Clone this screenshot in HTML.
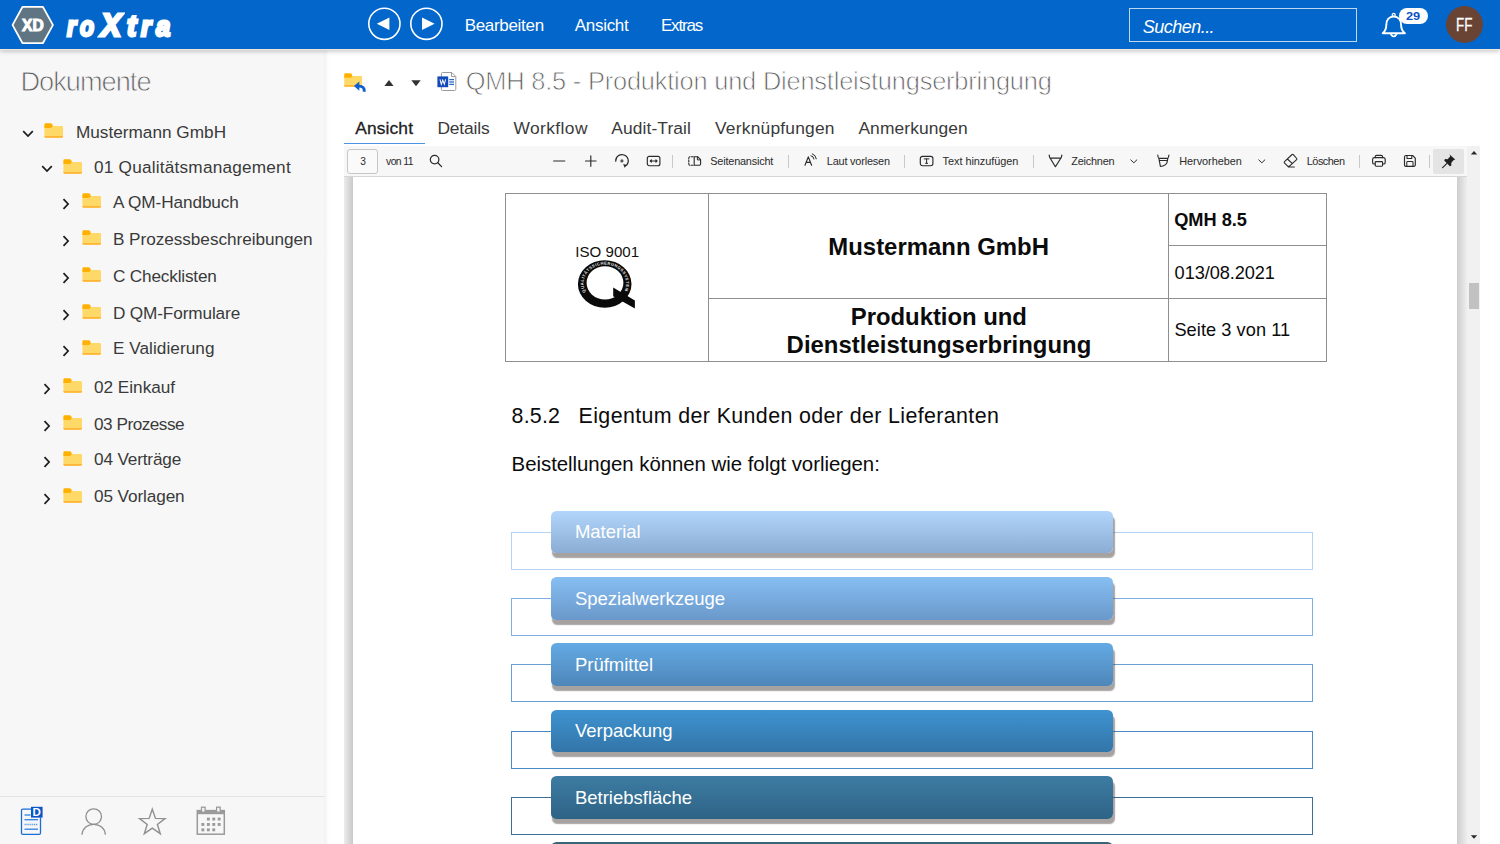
<!DOCTYPE html>
<html lang="de">
<head>
<meta charset="utf-8">
<title>roXtra - QMH 8.5 - Produktion und Dienstleistungserbringung</title>
<style>
*{box-sizing:border-box;margin:0;padding:0}
html,body{width:1500px;height:844px;overflow:hidden;background:#fff;font-family:"Liberation Sans",sans-serif;color:#333}
.t{position:absolute;white-space:nowrap;line-height:1;display:block}
svg{position:absolute;overflow:visible}
#hdr{position:absolute;left:0;top:0;width:1500px;height:49px;background:#0266cb;box-shadow:0 1.2px 0 #f0e6de,0 2px 5px rgba(0,0,0,.26);z-index:10}
#side{position:absolute;left:0;top:49px;width:326px;height:795px;background:#f7f7f7;z-index:3}
#side .edge{position:absolute;left:324px;top:0;width:5px;height:795px;background:linear-gradient(90deg,#f3f4f6,#f4f5f7 30%,#fff)}
#side .foot{position:absolute;left:0;top:747px;width:324px;height:1px;background:#e3e3e3}
#main{position:absolute;left:326px;top:49px;width:1174px;height:795px;background:#fff}
#search{position:absolute;left:1129px;top:8px;width:228px;height:34px;border:1px solid rgba(255,255,255,.75)}
#avatar{position:absolute;left:1445.6px;top:6px;width:37.2px;height:37.4px;border-radius:50%;background:#694435}
#badge{position:absolute;left:1398.7px;top:8.2px;width:29px;height:15.6px;border-radius:8px;background:#fff}

#tabline{position:absolute;left:18px;top:93.5px;width:81px;height:1.4px;background:#4a94e4}
#tb{position:absolute;left:18px;top:97px;width:1123px;height:31.2px;background:#f7f7f7;border-bottom:1.4px solid #d6d6d6}
#tb .pg{position:absolute;left:3px;top:2.5px;width:31px;height:25px;border:1px solid #c6c6c6;border-radius:3px;background:#fafafa}
#tb .sep{position:absolute;top:9px;width:1px;height:13px;background:#c8c8c8}
#tb .pin{position:absolute;left:1089px;top:2.5px;width:31px;height:25px;background:#e4e4e4;border-radius:2px}
#sb{position:absolute;left:1141px;top:97px;width:13px;height:698px;background:#f1f1f1}
#sb .th{position:absolute;left:2px;top:136.5px;width:9.5px;height:26px;background:#c1c1c1}

#vw{position:absolute;left:18px;top:128px;width:1123px;height:667px;background:#fff;overflow:hidden}
#vw .l{position:absolute;left:0;top:0;width:9px;height:667px;background:linear-gradient(90deg,#ececec,#c9c9c9)}
#vw .r{position:absolute;left:1113px;top:0;width:10px;height:667px;background:linear-gradient(90deg,#cdcdcd,#eeeeee)}
.ln{position:absolute;background:#8e8e8e}
.bar{position:absolute;left:225px;width:561.5px;height:42.7px;border-radius:5.5px;box-shadow:1.8px 5px 1.2px rgba(70,60,60,.48)}
.ol{position:absolute;left:184.5px;width:802.5px;height:38.1px;border:1.1px solid #000}
</style>
</head>
<body>
<div id="hdr"><svg style="left:0;top:0" width="200" height="49"><polygon points="12.9,25 22.7,7.1 42.7,7.1 52.6,25 42.7,42.9 22.7,42.9" fill="#fff" stroke="#fff" stroke-width="2.4" stroke-linejoin="round"/><polygon points="14.6,25 23.6,8.6 41.8,8.6 50.9,25 41.8,41.4 23.6,41.4" fill="#5f7583" stroke="#5f7583" stroke-width="1.9" stroke-linejoin="round"/></svg>
<span class="t" style="left:22.19px;top:18px;font-size:16px;color:#fff;font-weight:bold;transform:scaleX(0.9731);transform-origin:0.00px 50%;-webkit-text-stroke:1px #fff;paint-order:stroke fill;">XD</span>
<span class="t" style="left:67.04px;top:12px;font-size:28.5px;color:#fff;font-weight:bold;font-style:italic;transform:scaleX(0.8159);transform-origin:0.00px 50%;-webkit-text-stroke:2.8px #fff;paint-order:stroke fill;">r</span>
<span class="t" style="left:80.03px;top:12px;font-size:28.5px;color:#fff;font-weight:bold;font-style:italic;transform:scaleX(0.8064);transform-origin:0.00px 50%;-webkit-text-stroke:2.8px #fff;paint-order:stroke fill;">o</span>
<span class="t" style="left:101.19px;top:10px;font-size:30.5px;color:#fff;font-weight:bold;font-style:italic;transform:scaleX(0.9896);transform-origin:-1.40px 50%;-webkit-text-stroke:2.8px #fff;paint-order:stroke fill;">X</span>
<span class="t" style="left:126.61px;top:11px;font-size:29.5px;color:#fff;font-weight:bold;font-style:italic;transform:scaleX(0.9373);transform-origin:0.00px 50%;-webkit-text-stroke:2.8px #fff;paint-order:stroke fill;">t</span>
<span class="t" style="left:140.86px;top:12px;font-size:28.5px;color:#fff;font-weight:bold;font-style:italic;transform:scaleX(0.9015);transform-origin:0.00px 50%;-webkit-text-stroke:2.8px #fff;paint-order:stroke fill;">r</span>
<span class="t" style="left:156.05px;top:12px;font-size:28.5px;color:#fff;font-weight:bold;font-style:italic;transform:scaleX(0.8956);transform-origin:0.00px 50%;-webkit-text-stroke:2.8px #fff;paint-order:stroke fill;">a</span>
<svg style="left:360px;top:0" width="100" height="49"><g fill="none" stroke="#fff" stroke-width="1.6"><circle cx="24.4" cy="23.8" r="15.6"/><circle cx="66.4" cy="23.8" r="15.6"/></g><polygon points="16.8,23.7 29.4,17.4 29.4,30" fill="#fff"/><polygon points="74.6,23.7 62,17.4 62,30" fill="#fff"/></svg>
<span class="t" style="left:464.70px;top:17px;font-size:17px;color:#fff;letter-spacing:-0.314px;">Bearbeiten</span>
<span class="t" style="left:574.80px;top:17px;font-size:17px;color:#fff;letter-spacing:-0.307px;">Ansicht</span>
<span class="t" style="left:660.90px;top:17px;font-size:17px;color:#fff;letter-spacing:-1.156px;">Extras</span>
<div id="search"></div>
<span class="t" style="left:1142.80px;top:18px;font-size:18px;color:#fff;letter-spacing:-0.531px;font-style:italic;">Suchen...</span>
<svg style="left:1380px;top:10px" width="30" height="30" viewBox="0 0 30 30"><circle cx="13.7" cy="4.9" r="1.5" fill="none" stroke="#fff" stroke-width="1.3"/><path d="M2.7,23.2 H24.9 C22.4,21.2 21.1,19 21.1,15 C21.1,9.6 18,6.5 13.7,6.5 C9.4,6.5 6.3,9.6 6.3,15 C6.3,19 5.2,21.2 2.7,23.2 Z" fill="#0266cb" stroke="#fff" stroke-width="1.9" stroke-linejoin="round"/><path d="M10.6,24 q3.1,5 6.2,0" fill="none" stroke="#fff" stroke-width="1.7"/></svg>
<div id="badge"></div>
<span class="t" style="left:1406.20px;top:11px;font-size:11.8px;color:#0a50c0;font-weight:bold;transform:scaleX(1.0822);transform-origin:0.00px 50%;">29</span>
<div id="avatar"></div>
<span class="t" style="left:1455.80px;top:16px;font-size:18px;color:#fff;transform:scaleX(0.7456);transform-origin:0.00px 50%;-webkit-text-stroke:0.3px #fff;">FF</span></div>
<div id="side"><div class="edge"></div>
<span class="t" style="left:20.40px;top:19px;font-size:27.2px;color:#5c5c5c;letter-spacing:-0.988px;-webkit-text-stroke:0.85px #f7f7f7;">Dokumente</span>
<svg style="left:22.3px;top:80.9px" width="12" height="8" viewBox="0 0 12 8"><path d="M1.2,1.2 L6,6 L10.8,1.2" fill="none" stroke="#1c1c1c" stroke-width="1.7" stroke-linejoin="miter"/></svg>
<svg style="left:44.3px;top:74.4px" width="20" height="15" viewBox="0 0 20 15"><path d="M0.4,3.1 h17.5 a1.1,1.1 0 0 1 1.1,1.1 v9.4 a1.1,1.1 0 0 1 -1.1,1.1 h-16.4 a1.1,1.1 0 0 1 -1.1,-1.1 z" fill="#ffd968"/><path d="M0.4,12.9 h18.6 v0.7 a1.1,1.1 0 0 1 -1.1,1.1 h-16.4 a1.1,1.1 0 0 1 -1.1,-1.1 z" fill="#ffb536"/><path d="M0.4,1.5 a1.2,1.2 0 0 1 1.2,-1.2 h4.9 a2.3,2.3 0 0 1 2.2,1.7 a2.6,2.6 0 0 1 -2.4,2.9 h-5.9 z" fill="#ffb000"/></svg>
<span class="t" style="left:75.90px;top:75px;font-size:17.2px;color:#3a3a3a;letter-spacing:0.016px;">Mustermann GmbH</span>
<svg style="left:41.1px;top:116.0px" width="12" height="8" viewBox="0 0 12 8"><path d="M1.2,1.2 L6,6 L10.8,1.2" fill="none" stroke="#1c1c1c" stroke-width="1.7" stroke-linejoin="miter"/></svg>
<svg style="left:63.0px;top:109.5px" width="20" height="15" viewBox="0 0 20 15"><path d="M0.4,3.1 h17.5 a1.1,1.1 0 0 1 1.1,1.1 v9.4 a1.1,1.1 0 0 1 -1.1,1.1 h-16.4 a1.1,1.1 0 0 1 -1.1,-1.1 z" fill="#ffd968"/><path d="M0.4,12.9 h18.6 v0.7 a1.1,1.1 0 0 1 -1.1,1.1 h-16.4 a1.1,1.1 0 0 1 -1.1,-1.1 z" fill="#ffb536"/><path d="M0.4,1.5 a1.2,1.2 0 0 1 1.2,-1.2 h4.9 a2.3,2.3 0 0 1 2.2,1.7 a2.6,2.6 0 0 1 -2.4,2.9 h-5.9 z" fill="#ffb000"/></svg>
<span class="t" style="left:94.00px;top:110px;font-size:17.2px;color:#3a3a3a;letter-spacing:0.220px;">01 Qualitätsmanagement</span>
<svg style="left:61.9px;top:149.4px" width="8" height="12" viewBox="0 0 8 12"><path d="M1.5,1.2 L6.1,6 L1.5,10.8" fill="none" stroke="#1c1c1c" stroke-width="1.7" stroke-linejoin="miter"/></svg>
<svg style="left:82.0px;top:144.2px" width="20" height="15" viewBox="0 0 20 15"><path d="M0.4,3.1 h17.5 a1.1,1.1 0 0 1 1.1,1.1 v9.4 a1.1,1.1 0 0 1 -1.1,1.1 h-16.4 a1.1,1.1 0 0 1 -1.1,-1.1 z" fill="#ffd968"/><path d="M0.4,12.9 h18.6 v0.7 a1.1,1.1 0 0 1 -1.1,1.1 h-16.4 a1.1,1.1 0 0 1 -1.1,-1.1 z" fill="#ffb536"/><path d="M0.4,1.5 a1.2,1.2 0 0 1 1.2,-1.2 h4.9 a2.3,2.3 0 0 1 2.2,1.7 a2.6,2.6 0 0 1 -2.4,2.9 h-5.9 z" fill="#ffb000"/></svg>
<span class="t" style="left:112.90px;top:145px;font-size:17.2px;color:#3a3a3a;letter-spacing:-0.088px;">A QM-Handbuch</span>
<svg style="left:61.9px;top:185.9px" width="8" height="12" viewBox="0 0 8 12"><path d="M1.5,1.2 L6.1,6 L1.5,10.8" fill="none" stroke="#1c1c1c" stroke-width="1.7" stroke-linejoin="miter"/></svg>
<svg style="left:82.0px;top:180.7px" width="20" height="15" viewBox="0 0 20 15"><path d="M0.4,3.1 h17.5 a1.1,1.1 0 0 1 1.1,1.1 v9.4 a1.1,1.1 0 0 1 -1.1,1.1 h-16.4 a1.1,1.1 0 0 1 -1.1,-1.1 z" fill="#ffd968"/><path d="M0.4,12.9 h18.6 v0.7 a1.1,1.1 0 0 1 -1.1,1.1 h-16.4 a1.1,1.1 0 0 1 -1.1,-1.1 z" fill="#ffb536"/><path d="M0.4,1.5 a1.2,1.2 0 0 1 1.2,-1.2 h4.9 a2.3,2.3 0 0 1 2.2,1.7 a2.6,2.6 0 0 1 -2.4,2.9 h-5.9 z" fill="#ffb000"/></svg>
<span class="t" style="left:112.90px;top:182px;font-size:17.2px;color:#3a3a3a;letter-spacing:-0.041px;">B Prozessbeschreibungen</span>
<svg style="left:61.9px;top:223.3px" width="8" height="12" viewBox="0 0 8 12"><path d="M1.5,1.2 L6.1,6 L1.5,10.8" fill="none" stroke="#1c1c1c" stroke-width="1.7" stroke-linejoin="miter"/></svg>
<svg style="left:82.0px;top:218.1px" width="20" height="15" viewBox="0 0 20 15"><path d="M0.4,3.1 h17.5 a1.1,1.1 0 0 1 1.1,1.1 v9.4 a1.1,1.1 0 0 1 -1.1,1.1 h-16.4 a1.1,1.1 0 0 1 -1.1,-1.1 z" fill="#ffd968"/><path d="M0.4,12.9 h18.6 v0.7 a1.1,1.1 0 0 1 -1.1,1.1 h-16.4 a1.1,1.1 0 0 1 -1.1,-1.1 z" fill="#ffb536"/><path d="M0.4,1.5 a1.2,1.2 0 0 1 1.2,-1.2 h4.9 a2.3,2.3 0 0 1 2.2,1.7 a2.6,2.6 0 0 1 -2.4,2.9 h-5.9 z" fill="#ffb000"/></svg>
<span class="t" style="left:112.90px;top:219px;font-size:17.2px;color:#3a3a3a;letter-spacing:-0.167px;">C Checklisten</span>
<svg style="left:61.9px;top:260.0px" width="8" height="12" viewBox="0 0 8 12"><path d="M1.5,1.2 L6.1,6 L1.5,10.8" fill="none" stroke="#1c1c1c" stroke-width="1.7" stroke-linejoin="miter"/></svg>
<svg style="left:82.0px;top:254.8px" width="20" height="15" viewBox="0 0 20 15"><path d="M0.4,3.1 h17.5 a1.1,1.1 0 0 1 1.1,1.1 v9.4 a1.1,1.1 0 0 1 -1.1,1.1 h-16.4 a1.1,1.1 0 0 1 -1.1,-1.1 z" fill="#ffd968"/><path d="M0.4,12.9 h18.6 v0.7 a1.1,1.1 0 0 1 -1.1,1.1 h-16.4 a1.1,1.1 0 0 1 -1.1,-1.1 z" fill="#ffb536"/><path d="M0.4,1.5 a1.2,1.2 0 0 1 1.2,-1.2 h4.9 a2.3,2.3 0 0 1 2.2,1.7 a2.6,2.6 0 0 1 -2.4,2.9 h-5.9 z" fill="#ffb000"/></svg>
<span class="t" style="left:112.90px;top:256px;font-size:17.2px;color:#3a3a3a;letter-spacing:-0.124px;">D QM-Formulare</span>
<svg style="left:61.9px;top:295.8px" width="8" height="12" viewBox="0 0 8 12"><path d="M1.5,1.2 L6.1,6 L1.5,10.8" fill="none" stroke="#1c1c1c" stroke-width="1.7" stroke-linejoin="miter"/></svg>
<svg style="left:82.0px;top:290.6px" width="20" height="15" viewBox="0 0 20 15"><path d="M0.4,3.1 h17.5 a1.1,1.1 0 0 1 1.1,1.1 v9.4 a1.1,1.1 0 0 1 -1.1,1.1 h-16.4 a1.1,1.1 0 0 1 -1.1,-1.1 z" fill="#ffd968"/><path d="M0.4,12.9 h18.6 v0.7 a1.1,1.1 0 0 1 -1.1,1.1 h-16.4 a1.1,1.1 0 0 1 -1.1,-1.1 z" fill="#ffb536"/><path d="M0.4,1.5 a1.2,1.2 0 0 1 1.2,-1.2 h4.9 a2.3,2.3 0 0 1 2.2,1.7 a2.6,2.6 0 0 1 -2.4,2.9 h-5.9 z" fill="#ffb000"/></svg>
<span class="t" style="left:112.90px;top:291px;font-size:17.2px;color:#3a3a3a;letter-spacing:0.056px;">E Validierung</span>
<svg style="left:42.9px;top:334.3px" width="8" height="12" viewBox="0 0 8 12"><path d="M1.5,1.2 L6.1,6 L1.5,10.8" fill="none" stroke="#1c1c1c" stroke-width="1.7" stroke-linejoin="miter"/></svg>
<svg style="left:63.0px;top:329.1px" width="20" height="15" viewBox="0 0 20 15"><path d="M0.4,3.1 h17.5 a1.1,1.1 0 0 1 1.1,1.1 v9.4 a1.1,1.1 0 0 1 -1.1,1.1 h-16.4 a1.1,1.1 0 0 1 -1.1,-1.1 z" fill="#ffd968"/><path d="M0.4,12.9 h18.6 v0.7 a1.1,1.1 0 0 1 -1.1,1.1 h-16.4 a1.1,1.1 0 0 1 -1.1,-1.1 z" fill="#ffb536"/><path d="M0.4,1.5 a1.2,1.2 0 0 1 1.2,-1.2 h4.9 a2.3,2.3 0 0 1 2.2,1.7 a2.6,2.6 0 0 1 -2.4,2.9 h-5.9 z" fill="#ffb000"/></svg>
<span class="t" style="left:94.00px;top:330px;font-size:17.2px;color:#3a3a3a;letter-spacing:-0.014px;">02 Einkauf</span>
<svg style="left:42.9px;top:371.0px" width="8" height="12" viewBox="0 0 8 12"><path d="M1.5,1.2 L6.1,6 L1.5,10.8" fill="none" stroke="#1c1c1c" stroke-width="1.7" stroke-linejoin="miter"/></svg>
<svg style="left:63.0px;top:365.8px" width="20" height="15" viewBox="0 0 20 15"><path d="M0.4,3.1 h17.5 a1.1,1.1 0 0 1 1.1,1.1 v9.4 a1.1,1.1 0 0 1 -1.1,1.1 h-16.4 a1.1,1.1 0 0 1 -1.1,-1.1 z" fill="#ffd968"/><path d="M0.4,12.9 h18.6 v0.7 a1.1,1.1 0 0 1 -1.1,1.1 h-16.4 a1.1,1.1 0 0 1 -1.1,-1.1 z" fill="#ffb536"/><path d="M0.4,1.5 a1.2,1.2 0 0 1 1.2,-1.2 h4.9 a2.3,2.3 0 0 1 2.2,1.7 a2.6,2.6 0 0 1 -2.4,2.9 h-5.9 z" fill="#ffb000"/></svg>
<span class="t" style="left:94.00px;top:367px;font-size:17.2px;color:#3a3a3a;letter-spacing:-0.491px;">03 Prozesse</span>
<svg style="left:42.9px;top:406.8px" width="8" height="12" viewBox="0 0 8 12"><path d="M1.5,1.2 L6.1,6 L1.5,10.8" fill="none" stroke="#1c1c1c" stroke-width="1.7" stroke-linejoin="miter"/></svg>
<svg style="left:63.0px;top:401.6px" width="20" height="15" viewBox="0 0 20 15"><path d="M0.4,3.1 h17.5 a1.1,1.1 0 0 1 1.1,1.1 v9.4 a1.1,1.1 0 0 1 -1.1,1.1 h-16.4 a1.1,1.1 0 0 1 -1.1,-1.1 z" fill="#ffd968"/><path d="M0.4,12.9 h18.6 v0.7 a1.1,1.1 0 0 1 -1.1,1.1 h-16.4 a1.1,1.1 0 0 1 -1.1,-1.1 z" fill="#ffb536"/><path d="M0.4,1.5 a1.2,1.2 0 0 1 1.2,-1.2 h4.9 a2.3,2.3 0 0 1 2.2,1.7 a2.6,2.6 0 0 1 -2.4,2.9 h-5.9 z" fill="#ffb000"/></svg>
<span class="t" style="left:94.00px;top:402px;font-size:17.2px;color:#3a3a3a;letter-spacing:-0.162px;">04 Verträge</span>
<svg style="left:42.9px;top:443.7px" width="8" height="12" viewBox="0 0 8 12"><path d="M1.5,1.2 L6.1,6 L1.5,10.8" fill="none" stroke="#1c1c1c" stroke-width="1.7" stroke-linejoin="miter"/></svg>
<svg style="left:63.0px;top:438.5px" width="20" height="15" viewBox="0 0 20 15"><path d="M0.4,3.1 h17.5 a1.1,1.1 0 0 1 1.1,1.1 v9.4 a1.1,1.1 0 0 1 -1.1,1.1 h-16.4 a1.1,1.1 0 0 1 -1.1,-1.1 z" fill="#ffd968"/><path d="M0.4,12.9 h18.6 v0.7 a1.1,1.1 0 0 1 -1.1,1.1 h-16.4 a1.1,1.1 0 0 1 -1.1,-1.1 z" fill="#ffb536"/><path d="M0.4,1.5 a1.2,1.2 0 0 1 1.2,-1.2 h4.9 a2.3,2.3 0 0 1 2.2,1.7 a2.6,2.6 0 0 1 -2.4,2.9 h-5.9 z" fill="#ffb000"/></svg>
<span class="t" style="left:94.00px;top:439px;font-size:17.2px;color:#3a3a3a;letter-spacing:-0.111px;">05 Vorlagen</span>
<div class="foot"></div>
<svg style="left:20px;top:757px" width="24" height="30" viewBox="0 0 24 30"><path d="M11,3.2 h-8.2 a1.3,1.3 0 0 0 -1.3,1.3 v22.6 a1.3,1.3 0 0 0 1.3,1.3 h16.4 a1.3,1.3 0 0 0 1.3,-1.3 v-15.5" fill="none" stroke="#1a6fd6" stroke-width="1.3"/><g stroke="#2f7fe0" stroke-width="1.3"><path d="M4.5,9 h6"/><path d="M4.5,13.7 h13.5"/><path d="M4.5,23.2 h13.5"/></g><path d="M4.5,18.4 h13.5" stroke="#5b9be8" stroke-width="1.5" stroke-dasharray="1.2 0.7"/><rect x="11" y="0.8" width="11.6" height="10.8" fill="#0a55c8"/></svg>
<span class="t" style="left:32.50px;top:758px;font-size:11.5px;color:#fff;font-weight:bold;">D</span>
<svg style="left:80px;top:757px" width="28" height="30" viewBox="0 0 28 30"><circle cx="13.7" cy="10.6" r="7.8" fill="none" stroke="#909090" stroke-width="1.3"/><path d="M2,28.7 c0.5,-6.5 5.4,-10.4 11.7,-10.4 s11.2,3.9 11.7,10.4" fill="none" stroke="#909090" stroke-width="1.3"/></svg>
<svg style="left:138px;top:757px" width="30" height="30" viewBox="0 0 30 30"><path d="M14.3,3.2 L17.5,12.4 L27,12.6 L19.4,18.4 L22.3,27.7 L14.3,22.2 L6.3,27.7 L9.2,18.4 L1.6,12.6 L11.1,12.4 Z" fill="none" stroke="#909090" stroke-width="1.4" stroke-linejoin="miter"/></svg>
<svg style="left:196px;top:757px" width="30" height="30" viewBox="0 0 30 30"><rect x="1.3" y="4.6" width="27" height="23.6" fill="none" stroke="#9a9a9a" stroke-width="1.5"/><rect x="1.3" y="4.6" width="27" height="3.6" fill="#9a9a9a"/><rect x="5.5" y="1.2" width="3.6" height="5" fill="#f7f7f7" stroke="#9a9a9a" stroke-width="1.3"/><rect x="20.6" y="1.2" width="3.6" height="5" fill="#f7f7f7" stroke="#9a9a9a" stroke-width="1.3"/><g fill="#9a9a9a"><rect x="10.9" y="11.6" width="2.9" height="2.9"/><rect x="16.3" y="11.6" width="2.9" height="2.9"/><rect x="21.7" y="11.6" width="2.9" height="2.9"/><rect x="5.4" y="17" width="2.9" height="2.9"/><rect x="10.9" y="17" width="2.9" height="2.9"/><rect x="16.3" y="17" width="2.9" height="2.9"/><rect x="21.7" y="17" width="2.9" height="2.9"/><rect x="5.4" y="22.4" width="2.9" height="2.9"/><rect x="10.9" y="22.4" width="2.9" height="2.9"/><rect x="16.3" y="22.4" width="2.9" height="2.9"/></g></svg></div>
<div id="main">
<svg style="left:17.0px;top:23.0px" width="26" height="22" viewBox="0 0 26 22"><path d="M1.2,4 h16.8 a1.1,1.1 0 0 1 1.1,1.1 v8.6 a1.1,1.1 0 0 1 -1.1,1.1 h-15.7 a1.1,1.1 0 0 1 -1.1,-1.1 z" fill="#ffd968"/><path d="M1.2,13.1 h17.9 v0.6 a1.1,1.1 0 0 1 -1.1,1.1 h-15.7 a1.1,1.1 0 0 1 -1.1,-1.1 z" fill="#ffb536"/><path d="M1.2,2.4 a1.2,1.2 0 0 1 1.2,-1.2 h4.7 a2.2,2.2 0 0 1 2.1,1.7 a2.5,2.5 0 0 1 -2.3,2.8 h-5.7 z" fill="#ffb000"/><polygon points="10.9,14.1 16.3,9.5 16.3,18.7" fill="#0b5fd3"/><path d="M15.8,14.1 C19.6,14.1 21.9,15.9 21.1,19.8" fill="none" stroke="#0b5fd3" stroke-width="2.9"/></svg>
<svg style="left:57.0px;top:30.0px" width="12" height="8" viewBox="0 0 12 8"><polygon points="6,1 10.6,7 1.4,7" fill="#333"/></svg>
<svg style="left:84.0px;top:30.0px" width="12" height="8" viewBox="0 0 12 8"><polygon points="1.3,1.2 10.7,1.2 6,7.2" fill="#333"/></svg>
<svg style="left:111.0px;top:22.0px" width="20" height="22" viewBox="0 0 20 22"><path d="M5.5,1.5 h9.3 l4,4 v12.9 a1.1,1.1 0 0 1 -1.1,1.1 h-12.2 a1.1,1.1 0 0 1 -1.1,-1.1 v-15.8 a1.1,1.1 0 0 1 1.1,-1.1 z" fill="#fff" stroke="#9a9a9a" stroke-width="1"/><path d="M14.5,1.6 v4 h4" fill="none" stroke="#9a9a9a" stroke-width="1"/><g stroke="#2a6ad2" stroke-width="1.3"><path d="M12.2,8.6 h4.8"/><path d="M12.2,11 h4.8"/><path d="M12.2,13.4 h4.8"/></g><rect x="0.4" y="5.4" width="10.8" height="10.8" fill="#1349b8"/><path d="M3,8.4 L4.3,13.3 L5.8,9 L7.3,13.3 L8.6,8.4" fill="none" stroke="#fff" stroke-width="1.05" stroke-linejoin="miter"/></svg>
<span class="t" style="left:139.80px;top:20px;font-size:25.4px;color:#606060;letter-spacing:-0.196px;-webkit-text-stroke:0.8px #fff;">QMH 8.5 - Produktion und Dienstleistungserbringung</span>
<span class="t" style="left:29.30px;top:71px;font-size:17.4px;color:#222;letter-spacing:0.108px;-webkit-text-stroke:0.3px #222;">Ansicht</span>
<span class="t" style="left:111.40px;top:71px;font-size:17.4px;color:#3a3a3a;letter-spacing:-0.132px;">Details</span>
<span class="t" style="left:187.40px;top:71px;font-size:17.4px;color:#3a3a3a;letter-spacing:0.419px;">Workflow</span>
<span class="t" style="left:285.20px;top:71px;font-size:17.4px;color:#3a3a3a;letter-spacing:0.115px;">Audit-Trail</span>
<span class="t" style="left:389.00px;top:71px;font-size:17.4px;color:#3a3a3a;letter-spacing:0.211px;">Verknüpfungen</span>
<span class="t" style="left:532.40px;top:71px;font-size:17.4px;color:#3a3a3a;letter-spacing:0.107px;">Anmerkungen</span>
<div id="tabline"></div>
<div id="vw"><div class="l"></div><div class="r"></div></div>
<div class="ln" style="left:179.5px;top:143.9px;width:821.6px;height:1.1px"></div>
<div class="ln" style="left:179.5px;top:312.1px;width:821.6px;height:1.1px"></div>
<div class="ln" style="left:382.9px;top:248.7px;width:617.7px;height:1.1px"></div>
<div class="ln" style="left:842.6px;top:196.3px;width:158.0px;height:1.1px"></div>
<div class="ln" style="left:179.0px;top:144.4px;width:1.1px;height:168.2px"></div>
<div class="ln" style="left:382.4px;top:144.4px;width:1.1px;height:168.2px"></div>
<div class="ln" style="left:842.1px;top:144.4px;width:1.1px;height:168.2px"></div>
<div class="ln" style="left:1000.1px;top:144.4px;width:1.1px;height:168.2px"></div>
<span class="t" style="left:249.20px;top:195px;font-size:15.1px;color:#111;letter-spacing:0.029px;">ISO 9001</span>
<svg style="left:244.0px;top:206.0px" width="72" height="60" viewBox="0 0 72 60"><path fill-rule="evenodd" fill="#0a0a0a" d="M7.9,29 a26.8,23.8 0 1 0 53.6,0 a26.8,23.8 0 1 0 -53.6,0 Z M16.6,27.9 a18.4,16.7 0 1 1 36.8,0 a18.4,16.7 0 1 1 -36.8,0 Z"/><polygon fill="#0a0a0a" points="43.2,32.6 64.9,45.4 64.9,53.4 43.2,41.2"/><g font-family="Liberation Sans" font-weight="bold" font-size="4" fill="#f0f0f0" text-anchor="middle"><text x="15.10" y="35.54" transform="rotate(-114.5 15.10 35.54)">Q</text><text x="13.97" y="32.18" transform="rotate(-102.8 13.97 32.18)">U</text><text x="13.55" y="28.77" transform="rotate(-91.1 13.55 28.77)">A</text><text x="13.80" y="25.54" transform="rotate(-80.0 13.80 25.54)">L</text><text x="14.36" y="23.29" transform="rotate(-72.3 14.36 23.29)">I</text><text x="15.22" y="21.12" transform="rotate(-64.6 15.22 21.12)">T</text><text x="16.85" y="18.35" transform="rotate(-54.5 16.85 18.35)">Ä</text><text x="18.95" y="15.88" transform="rotate(-44.9 18.95 15.88)">T</text><text x="21.30" y="13.87" transform="rotate(-36.2 21.30 13.87)">S</text><text x="24.05" y="12.16" transform="rotate(-27.6 24.05 12.16)">S</text><text x="26.29" y="11.14" transform="rotate(-21.3 26.29 11.14)">I</text><text x="28.72" y="10.35" transform="rotate(-14.9 28.72 10.35)">C</text><text x="32.08" y="9.71" transform="rotate(-6.6 32.08 9.71)">H</text><text x="35.44" y="9.56" transform="rotate(1.4 35.44 9.56)">E</text><text x="38.73" y="9.87" transform="rotate(9.3 38.73 9.87)">R</text><text x="42.09" y="10.68" transform="rotate(17.8 42.09 10.68)">U</text><text x="45.30" y="11.98" transform="rotate(26.5 45.30 11.98)">N</text><text x="48.32" y="13.81" transform="rotate(35.9 48.32 13.81)">G</text><text x="50.94" y="16.06" transform="rotate(45.6 50.94 16.06)">S</text><text x="53.00" y="18.56" transform="rotate(55.3 53.00 18.56)">S</text><text x="54.59" y="21.35" transform="rotate(65.4 54.59 21.35)">Y</text><text x="55.65" y="24.37" transform="rotate(76.0 55.65 24.37)">S</text><text x="56.12" y="27.47" transform="rotate(86.7 56.12 27.47)">T</text><text x="56.02" y="30.56" transform="rotate(97.2 56.02 30.56)">E</text><text x="55.20" y="34.03" transform="rotate(109.2 55.20 34.03)">M</text></g></svg>
<span class="t" style="left:502.30px;top:186px;font-size:23.9px;color:#0b0b0b;letter-spacing:0.019px;font-weight:bold;">Mustermann GmbH</span>
<span class="t" style="left:524.80px;top:256px;font-size:23.9px;color:#0b0b0b;letter-spacing:-0.029px;font-weight:bold;">Produktion und</span>
<span class="t" style="left:460.60px;top:284px;font-size:23.9px;color:#0b0b0b;letter-spacing:0.030px;font-weight:bold;">Dienstleistungserbringung</span>
<span class="t" style="left:848.20px;top:162px;font-size:18.2px;color:#0b0b0b;letter-spacing:-0.003px;font-weight:bold;">QMH 8.5</span>
<span class="t" style="left:848.60px;top:215px;font-size:18.2px;color:#0b0b0b;letter-spacing:-0.081px;">013/08.2021</span>
<span class="t" style="left:848.40px;top:272px;font-size:18.2px;color:#0b0b0b;letter-spacing:0.069px;">Seite 3 von 11</span>
<span class="t" style="left:185.60px;top:357px;font-size:21.4px;color:#0b0b0b;letter-spacing:0.202px;">8.5.2</span>
<span class="t" style="left:252.60px;top:357px;font-size:21.4px;color:#0b0b0b;letter-spacing:0.377px;">Eigentum der Kunden oder der Lieferanten</span>
<span class="t" style="left:185.60px;top:405px;font-size:20.4px;color:#0b0b0b;letter-spacing:-0.033px;">Beistellungen können wie folgt vorliegen:</span>
<div class="ol" style="top:482.5px;border-color:#b7d3f3"></div>
<div class="bar" style="top:461.6px;background:linear-gradient(180deg,#b2d5fb,#8badd4)"></div>
<span class="t" style="left:248.90px;top:474px;font-size:18.5px;color:#fff;">Material</span>
<div class="ol" style="top:548.9px;border-color:#7fb0e3"></div>
<div class="bar" style="top:528.0px;background:linear-gradient(180deg,#87bff3,#6a98ca)"></div>
<span class="t" style="left:248.90px;top:541px;font-size:18.5px;color:#fff;">Spezialwerkzeuge</span>
<div class="ol" style="top:615.2px;border-color:#68a0d6"></div>
<div class="bar" style="top:594.3px;background:linear-gradient(180deg,#63aae4,#4e86b9)"></div>
<span class="t" style="left:248.90px;top:607px;font-size:18.5px;color:#fff;">Prüfmittel</span>
<div class="ol" style="top:681.5px;border-color:#4a8bc3"></div>
<div class="bar" style="top:660.6px;background:linear-gradient(180deg,#3f93d1,#3275a8)"></div>
<span class="t" style="left:248.90px;top:673px;font-size:18.5px;color:#fff;">Verpackung</span>
<div class="ol" style="top:747.9px;border-color:#3b6f98"></div>
<div class="bar" style="top:727.0px;background:linear-gradient(180deg,#3d7ca3,#2e6385)"></div>
<span class="t" style="left:248.90px;top:740px;font-size:18.5px;color:#fff;">Betriebsfläche</span>
<div class="ol" style="top:814.2px;border-color:#35606f"></div>
<div class="bar" style="top:793.4px;background:linear-gradient(180deg,#3a6679,#2c5163)"></div>
<span class="t" style="left:248.90px;top:806px;font-size:18.5px;color:#fff;">Transport</span>
<div id="tb"><div class="pg"></div>
<div class="sep" style="left:327.5px"></div>
<div class="sep" style="left:443.5px"></div>
<div class="sep" style="left:559.8px"></div>
<div class="sep" style="left:688.5px"></div>
<div class="sep" style="left:1015.1px"></div>
<div class="sep" style="left:1084.5px"></div>
<div class="pin"></div></div>
<span class="t" style="left:34.30px;top:108px;font-size:10.2px;color:#2a2a2a;">3</span>
<span class="t" style="left:60.00px;top:108px;font-size:10.4px;color:#2a2a2a;letter-spacing:-0.570px;">von 11</span>
<svg style="left:103.0px;top:105.0px" width="14" height="14" viewBox="0 0 14 14"><circle cx="5.6" cy="5.6" r="4.3" fill="none" stroke="#2a2a2a" stroke-width="1.2" stroke-linecap="round" stroke-linejoin="round"/><path d="M8.8,8.8 L12.6,12.6" fill="none" stroke="#2a2a2a" stroke-width="1.3" stroke-linecap="round" stroke-linejoin="round"/></svg>
<svg style="left:226.0px;top:106.0px" width="14" height="12" viewBox="0 0 14 12"><path d="M1.6,6 H12.8" fill="none" stroke="#2a2a2a" stroke-width="1.15" stroke-linecap="round" stroke-linejoin="round"/></svg>
<svg style="left:258.0px;top:106.0px" width="14" height="12" viewBox="0 0 14 12"><path d="M1.5,6 H12.1 M6.8,0.7 V11.3" fill="none" stroke="#2a2a2a" stroke-width="1.15" stroke-linecap="round" stroke-linejoin="round"/></svg>
<svg style="left:288.0px;top:104.0px" width="16" height="16" viewBox="0 0 16 16"><path d="M1.7,8.2 A6.3,6.3 0 1 1 12.6,12.2" fill="none" stroke="#2a2a2a" stroke-width="1.15" stroke-linecap="round" stroke-linejoin="round"/><path d="M9.2,11 L13.2,12 L10.6,14.8 Z" fill="#2a2a2a"/><circle cx="7.9" cy="7.9" r="1.6" fill="#555"/></svg>
<svg style="left:320.0px;top:106.0px" width="16" height="12" viewBox="0 0 16 12"><rect x="1.3" y="1.3" width="12.6" height="9.4" rx="2" fill="none" stroke="#2a2a2a" stroke-width="1.15" stroke-linecap="round" stroke-linejoin="round"/><path d="M4.4,6 H10.8" fill="none" stroke="#2a2a2a" stroke-width="1" stroke-linecap="round" stroke-linejoin="round"/><path d="M5.4,4.6 L3.9,6 L5.4,7.4 Z M9.8,4.6 L11.3,6 L9.8,7.4 Z" fill="#2a2a2a" stroke="#2a2a2a" stroke-width="0.8" stroke-linejoin="round"/></svg>
<svg style="left:361.0px;top:106.0px" width="16" height="12" viewBox="0 0 16 12"><path d="M6.2,1.7 H3.2 a1.4,1.4 0 0 0 -1.4,1.4 V8.9 a1.4,1.4 0 0 0 1.4,1.4 H6.2" fill="none" stroke="#2a2a2a" stroke-width="1.1" stroke-linecap="round" stroke-linejoin="round" stroke-dasharray="2 1.4"/><path d="M7.2,1.7 H10.6 L13.6,4.7 V8.9 a1.4,1.4 0 0 1 -1.4,1.4 H7.2 Z" fill="none" stroke="#2a2a2a" stroke-width="1.1" stroke-linecap="round" stroke-linejoin="round"/><path d="M10.4,1.9 V4.9 H13.4" fill="none" stroke="#2a2a2a" stroke-width="1" stroke-linecap="round" stroke-linejoin="round"/></svg>
<span class="t" style="left:384.30px;top:107px;font-size:10.9px;color:#2a2a2a;letter-spacing:-0.195px;">Seitenansicht</span>
<svg style="left:477.0px;top:105.0px" width="16" height="14" viewBox="0 0 16 14"><path d="M2,11.2 L5.3,2.9 L8.6,11.2 M3.2,8.3 H7.4" fill="none" stroke="#2a2a2a" stroke-width="1.15" stroke-linecap="round" stroke-linejoin="round"/><path d="M7.9,1.7 A3.7,3.7 0 0 1 11,5 M9.3,-0.2 A6,6 0 0 1 13.3,4.8" fill="none" stroke="#2a2a2a" stroke-width="1.0" stroke-linecap="round" stroke-linejoin="round"/></svg>
<span class="t" style="left:500.80px;top:107px;font-size:10.9px;color:#2a2a2a;letter-spacing:-0.187px;">Laut vorlesen</span>
<svg style="left:593.0px;top:106.0px" width="16" height="12" viewBox="0 0 16 12"><rect x="1.3" y="1.3" width="12.6" height="9.4" rx="2.2" fill="none" stroke="#2a2a2a" stroke-width="1.15" stroke-linecap="round" stroke-linejoin="round"/><path d="M5.2,3.9 H10 M7.6,3.9 V8.3 M6.6,8.3 H8.6" fill="none" stroke="#2a2a2a" stroke-width="1" stroke-linecap="round" stroke-linejoin="round"/></svg>
<span class="t" style="left:616.60px;top:107px;font-size:10.9px;color:#2a2a2a;letter-spacing:-0.040px;">Text hinzufügen</span>
<svg style="left:722.0px;top:105.0px" width="16" height="14" viewBox="0 0 16 14"><path d="M1.2,1 Q1.3,3.4 2.2,4.2 H12.8 Q13.7,3.4 13.8,1 M2.2,4.2 L7.4,12.7 L12.8,4.2" fill="none" stroke="#2a2a2a" stroke-width="1.2" stroke-linecap="round" stroke-linejoin="round"/></svg>
<span class="t" style="left:745.20px;top:107px;font-size:10.9px;color:#2a2a2a;letter-spacing:-0.206px;">Zeichnen</span>
<svg style="left:803.0px;top:109.0px" width="10" height="7" viewBox="0 0 10 7"><path d="M1.8,1.9 L4.8,4.8 L7.8,1.9" fill="none" stroke="#2a2a2a" stroke-width="1" stroke-linecap="round" stroke-linejoin="round"/></svg>
<svg style="left:830.0px;top:105.0px" width="16" height="14" viewBox="0 0 16 14"><path d="M1.8,1 Q1.9,3.6 2.9,4.4 H11.8 Q12.7,3.6 12.9,1 M3.2,6.5 H11.4 M2.9,4.4 L4.4,12.5 C7.6,12 10.2,10.8 11,8.6 L11.8,4.4" fill="none" stroke="#2a2a2a" stroke-width="1.15" stroke-linecap="round" stroke-linejoin="round"/></svg>
<span class="t" style="left:853.30px;top:107px;font-size:10.9px;color:#2a2a2a;letter-spacing:-0.051px;">Hervorheben</span>
<svg style="left:930.5px;top:109.0px" width="10" height="7" viewBox="0 0 10 7"><path d="M1.8,1.9 L4.8,4.8 L7.8,1.9" fill="none" stroke="#2a2a2a" stroke-width="1" stroke-linecap="round" stroke-linejoin="round"/></svg>
<svg style="left:957.0px;top:104.0px" width="16" height="16" viewBox="0 0 16 16"><path d="M9.1,1.5 Q9.7,1 10.3,1.6 L13.7,5.5 Q14.2,6.1 13.6,6.7 L6.2,13.4 H4.9 L1.4,9.9 Q0.9,9.2 1.5,8.6 Z M4.4,6 L9.4,10.7 M5.4,14 H11.3" fill="none" stroke="#2a2a2a" stroke-width="1.1" stroke-linecap="round" stroke-linejoin="round"/></svg>
<span class="t" style="left:980.80px;top:107px;font-size:10.9px;color:#2a2a2a;letter-spacing:-0.502px;">Löschen</span>
<svg style="left:1045.0px;top:105.0px" width="16" height="14" viewBox="0 0 16 14"><path d="M4.2,3.6 V2.8 a1.4,1.4 0 0 1 1.4,-1.4 h4.6 a1.4,1.4 0 0 1 1.4,1.4 V3.6" fill="none" stroke="#2a2a2a" stroke-width="1.15" stroke-linecap="round" stroke-linejoin="round"/><path d="M4.2,10 H3.2 a1.6,1.6 0 0 1 -1.6,-1.6 V5.4 a1.8,1.8 0 0 1 1.8,-1.8 h9 a1.8,1.8 0 0 1 1.8,1.8 V8.4 a1.6,1.6 0 0 1 -1.6,1.6 H11.6" fill="none" stroke="#2a2a2a" stroke-width="1.15" stroke-linecap="round" stroke-linejoin="round"/><rect x="4.2" y="7.6" width="7.4" height="4.6" rx="0.9" fill="none" stroke="#2a2a2a" stroke-width="1.15" stroke-linecap="round" stroke-linejoin="round"/></svg>
<svg style="left:1077.0px;top:105.0px" width="14" height="14" viewBox="0 0 14 14"><path d="M2.9,1.5 H9.6 L12.3,4.2 V10.9 a1.4,1.4 0 0 1 -1.4,1.4 H2.9 a1.4,1.4 0 0 1 -1.4,-1.4 V2.9 a1.4,1.4 0 0 1 1.4,-1.4 Z" fill="none" stroke="#2a2a2a" stroke-width="1.15" stroke-linecap="round" stroke-linejoin="round"/><path d="M4,1.7 V4.4 H8.8 V1.7 M3.8,12.1 V8.2 a0.8,0.8 0 0 1 0.8,-0.8 h4.6 a0.8,0.8 0 0 1 0.8,0.8 V12.1" fill="none" stroke="#2a2a2a" stroke-width="1.05" stroke-linecap="round" stroke-linejoin="round"/></svg>
<svg style="left:1114.0px;top:104.0px" width="18" height="16" viewBox="0 0 18 16"><path d="M9.6,1.4 L15.2,6.4 L13.4,7.2 L11.2,10 L11.4,12.6 L9.9,13.2 L4.2,7.6 L5,6.1 L7.6,6.2 L10.2,3.6 Z" fill="#1f1f1f"/><path d="M7,10.4 L2.6,14.6" stroke="#1f1f1f" stroke-width="1.1" stroke-linecap="round"/></svg>
<div id="sb"><div class="th"></div></div>
<svg style="left:1144.0px;top:101.0px" width="8" height="6" viewBox="0 0 8 6"><polygon points="4,1.0 7.2,4.6 0.8,4.6" fill="#2a2a2a"/></svg>
<svg style="left:1144.0px;top:785.0px" width="8" height="6" viewBox="0 0 8 6"><polygon points="0.8,1.2 7.2,1.2 4,4.8" fill="#2a2a2a"/></svg>
</div>
</body>
</html>
